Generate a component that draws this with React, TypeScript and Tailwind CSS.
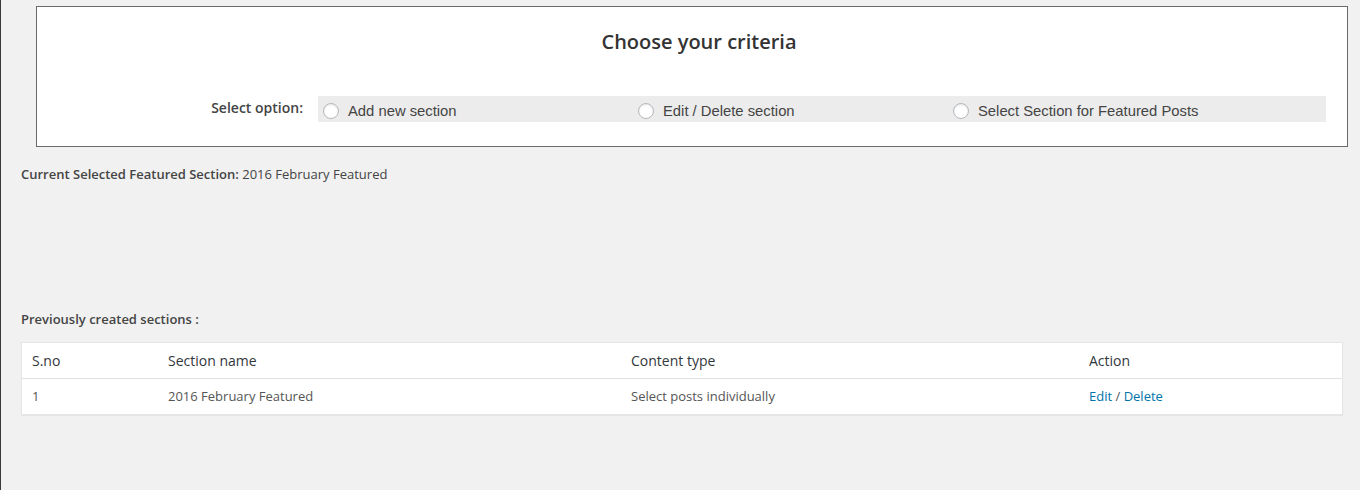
const RADIO_OPTIONS = ['Add new section', 'Edit / Delete section', 'Select Section for Featured Posts'];

const COLUMNS = [
  { label: 'S.no', width: 'w-[136px]' },
  { label: 'Section name', width: 'w-[463px]' },
  { label: 'Content type', width: 'w-[458px]' },
  { label: 'Action', width: 'flex-1' },
];

export default function App() {
  return (
    <div
      className="min-h-[490px] w-[1360px] bg-[#f1f1f1] border-l border-[#3a3a3a] text-[#444]"
      style={{ fontFamily: '"Open Sans", sans-serif' }}
    >
      <div className="pt-[6px] pl-[35px] pr-[12px]">
        <div className="bg-white border border-[#6a6a6a] h-[141px] flex flex-col">
          <h2 className="text-center text-[20px] font-semibold text-[#333] mt-[20px] pl-[14px] leading-[30px]">
            Choose your criteria
          </h2>
          <div className="flex items-start mt-[39px]">
            <div className="w-[281px] text-right pr-[15px] pt-[2px] text-[14px] font-semibold text-[#444] leading-[20px]">
              Select option:
            </div>
            <div className="w-[1008px] h-[26px] bg-[#ececec] flex items-center pl-[5px]">
              {RADIO_OPTIONS.map(opt => (
                <label
                  key={opt}
                  className="w-[315px] mt-[4px] flex items-center gap-[9px] text-[14.8px] text-[#444]"
                  style={{ fontFamily: '"Liberation Sans", Arial, sans-serif' }}
                >
                  <span className="w-[16px] h-[16px] rounded-full border border-[#b4b9be] bg-white shadow-[inset_0_1px_2px_rgba(0,0,0,0.1)]" />
                  {opt}
                </label>
              ))}
            </div>
          </div>
        </div>
      </div>

      <div className="px-[20px]">
        <p className="mt-[17px] text-[13px] leading-[20px]">
          <span className="font-semibold">Current Selected Featured Section:</span> 2016 February Featured
        </p>

        <p className="mt-[125px] text-[13px] leading-[20px] font-semibold">Previously created sections :</p>

        <div className="mt-[13px] w-[1322px] bg-white border border-[#e5e5e5] shadow-[0_1px_1px_rgba(0,0,0,0.04)]">
          <div className="flex h-[36px] items-center border-b border-[#e1e1e1]">
            {COLUMNS.map(col => (
              <div key={col.label} className={`${col.width} pl-[10px] text-[14px] text-[#32373c]`}>
                {col.label}
              </div>
            ))}
          </div>
          <div className="flex h-[35px] items-center text-[13px] text-[#555]">
            <div className="w-[136px] pl-[10px]">1</div>
            <div className="w-[463px] pl-[10px]">2016 February Featured</div>
            <div className="w-[458px] pl-[10px]">Select posts individually</div>
            <div className="flex-1 pl-[10px]">
              <a className="text-[#0073aa]">Edit</a> / <a className="text-[#0073aa]">Delete</a>
            </div>
          </div>
        </div>
      </div>
    </div>
  );
}
